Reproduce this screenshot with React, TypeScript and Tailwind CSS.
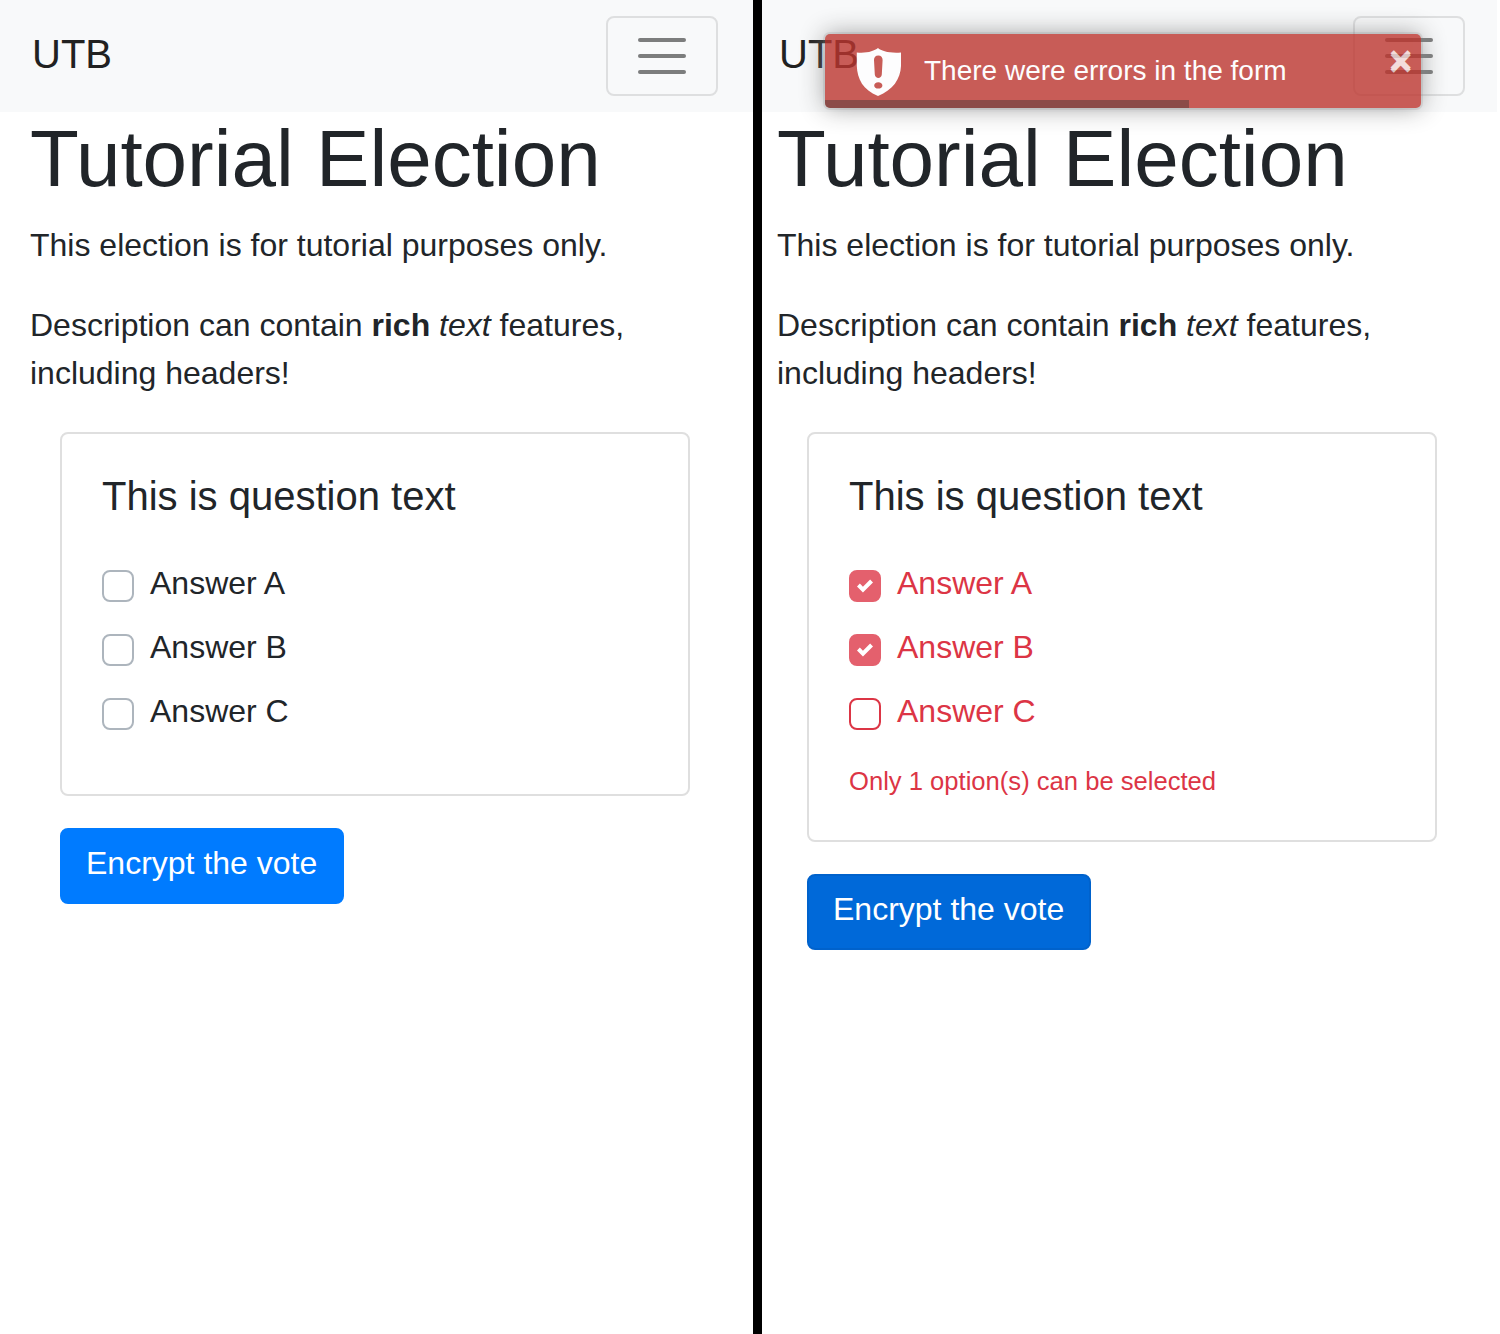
import React from "react";

function Navbar({ className }: { className: string }) {
  return (
    <nav className={`flex h-28 items-start justify-between bg-[#f8f9fa] pt-4 ${className}`}>
      <span className="mt-2 text-[40px] leading-[60px] text-[#212121]">UTB</span>
      <div className="flex h-20 w-28 flex-col items-center justify-center gap-3 rounded-lg border-2 border-[#dedfe0]">
        <span className="h-1 w-12 rounded-full bg-[#7c7d7d]" />
        <span className="h-1 w-12 rounded-full bg-[#7c7d7d]" />
        <span className="h-1 w-12 rounded-full bg-[#7c7d7d]" />
      </div>
    </nav>
  );
}

function Answer({ label, checked, invalid }: { label: string; checked: boolean; invalid: boolean }) {
  const box = checked
    ? "border-[#e4606d] bg-[#e4606d]"
    : invalid
      ? "border-[#dc3545] bg-white"
      : "border-[#adb5bd] bg-white";
  return (
    <div className="flex h-16 items-start">
      <span className={`mt-2 mr-4 flex size-8 items-center justify-center rounded-lg border-2 ${box}`}>
        {checked && (
          <svg viewBox="0 0 8 8" className="size-4" fill="#fff">
            <path d="M6.564.75l-3.59 3.612-1.538-1.55L0 4.26l2.974 2.99L8 2.193z" />
          </svg>
        )}
      </span>
      <span className={`-mt-[3px] text-[32px] leading-12 ${invalid ? "text-[#dc3545]" : "text-[#212529]"}`}>
        {label}
      </span>
    </div>
  );
}

function Ballot({ selected, error, buttonClass }: { selected: string[]; error?: string; buttonClass: string }) {
  return (
    <main className="text-[#212529]">
      <h1 className="-mt-px text-[80px] leading-24">Tutorial Election</h1>
      <p className="mt-[14px] text-[32px] leading-12">This election is for tutorial purposes only.</p>
      <p className="mt-8 text-[32px] leading-12">
        Description can contain <b>rich</b> <i>text</i> features,
        <br />
        including headers!
      </p>
      <section className="mt-[35px] ml-[30px] w-[630px] rounded-lg border-2 border-[#dfdfdf] p-10">
        <h2 className="-mt-[2px] text-[40px] leading-12">This is question text</h2>
        <div className="mt-[42px]">
          {["A", "B", "C"].map((a) => (
            <Answer key={a} label={`Answer ${a}`} checked={selected.includes(a)} invalid={!!error} />
          ))}
        </div>
        {error && <p className="h-[46px] pt-2 text-[25.6px] leading-[38px] text-[#dc3545]">{error}</p>}
      </section>
      <button
        className={`mt-8 ml-[30px] flex h-[76px] w-[284px] rounded-lg border-2 pt-[9px] pl-6 text-[32px] leading-12 text-white ${buttonClass}`}
      >
        Encrypt the vote
      </button>
    </main>
  );
}

function Toast() {
  return (
    <div className="absolute top-[34px] left-[63px] h-[74px] w-[596px] rounded-[5px] bg-[#bd362f] opacity-80 shadow-[0_0_0_2px_rgba(120,120,120,0.2),0_0_24px_#888]">
      <div className="relative h-full overflow-hidden rounded-[5px]">
        <svg viewBox="0 0 46 48" className="absolute top-[14px] left-[31px] h-12 w-[46px]">
          <path
            fillRule="evenodd"
            fill="#fff"
            d="M22 0C25 3 34 5.500 45 4.500V18C44.500 31 37 42 22 48C7 42 1.300 31 .8 18V4.500C11 5.500 18 3 22 0ZM22.300 7.500C19.500 7.500 18 9.500 18 12L18.800 26.500C19.200 31 25.500 31 25.800 26.500L26.600 12C26.600 9.500 25.100 7.500 22.300 7.500ZM22.300 34.200C19.800 34.200 18.200 35.600 18.200 37.400S19.800 40.600 22.300 40.600S26.400 39.200 26.400 37.400S24.800 34.200 22.300 34.200Z"
          />
        </svg>
        <span className="absolute top-4 left-[99px] text-[28px] leading-[42px] whitespace-nowrap text-white">
          There were errors in the form
        </span>
        <span className="absolute top-[6px] left-[564px] text-[40px] leading-[40px] font-bold text-white opacity-80 [text-shadow:0_2px_0_#fff]">
          ×
        </span>
        <div className="absolute bottom-0 left-0 h-2 w-[364px] bg-black opacity-40" />
      </div>
    </div>
  );
}

export default function App() {
  return (
    <div className="flex h-[1334px] w-[1500px] overflow-hidden bg-white font-['Liberation_Sans',sans-serif]">
      <div className="w-[753px]">
        <Navbar className="pr-[35px] pl-8" />
        <div className="pl-[30px]">
          <Ballot selected={[]} buttonClass="border-[#007bff] bg-[#007bff]" />
        </div>
      </div>
      <div className="w-[9px] bg-black" />
      <div className="relative w-[735px]">
        <Navbar className="pr-8 pl-[17px]" />
        <div className="pl-[15px]">
          <Ballot
            selected={["A", "B"]}
            error="Only 1 option(s) can be selected"
            buttonClass="border-[#0062cc] bg-[#0069d9]"
          />
        </div>
        <Toast />
      </div>
    </div>
  );
}
